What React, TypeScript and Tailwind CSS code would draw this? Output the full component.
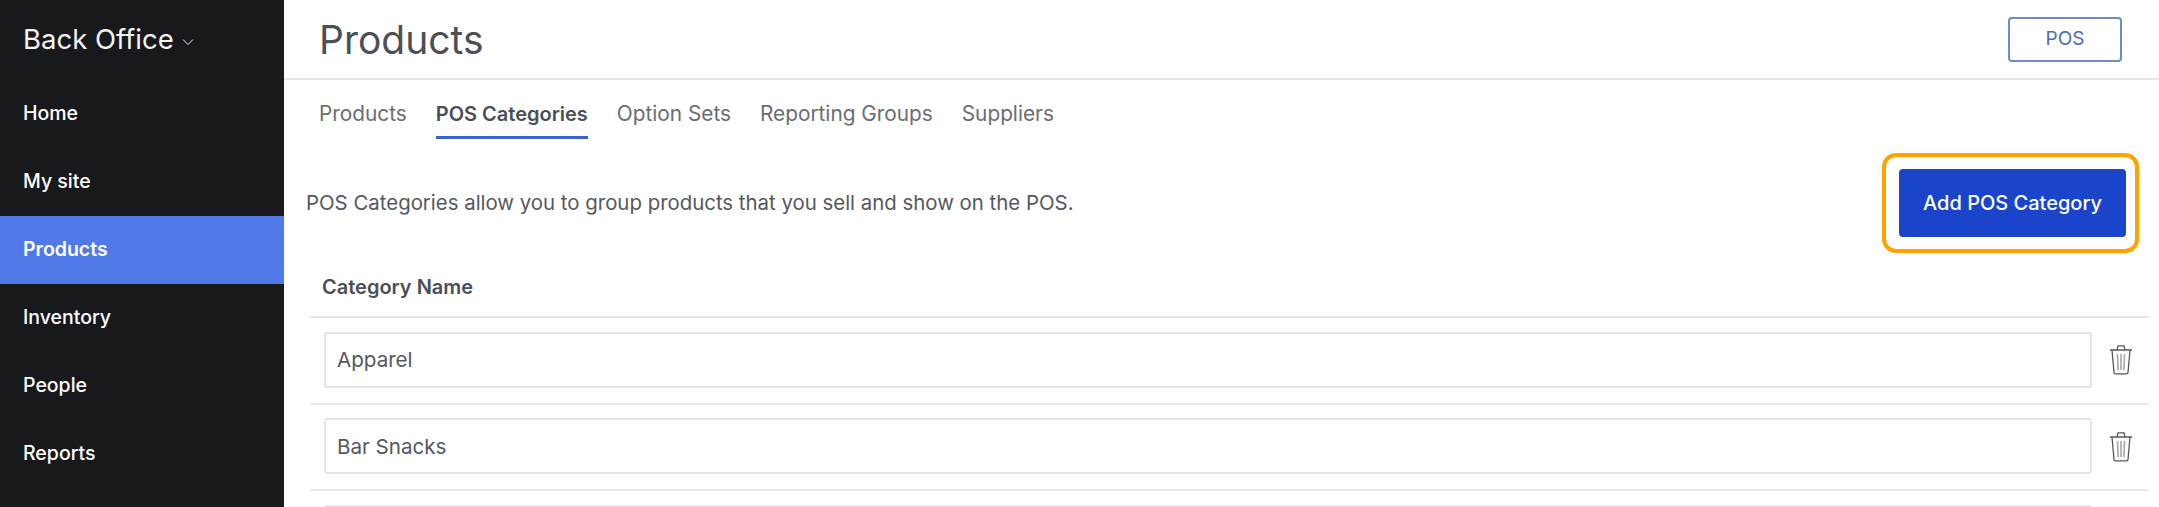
import React from 'react';

const navItems = ['Home', 'My site', 'Products', 'Inventory', 'People', 'Reports'];
const tabs = ['Products', 'POS Categories', 'Option Sets', 'Reporting Groups', 'Suppliers'];
const categories = ['Apparel', 'Bar Snacks', ''];

const TrashIcon = () => (
  <svg className="w-[24px] h-[31px] text-[#54585e]" viewBox="0 0 24 31" fill="none" stroke="currentColor" strokeWidth={1.3}>
    <path d="M1 6h22M8 6l1-4.2h6L16 6" />
    <path d="M3 6l2 22.5a1.5 1.5 0 001.5 1.3h11a1.5 1.5 0 001.5-1.3L21 6" />
    <path d="M8.5 10l.6 16M12 10v16M15.5 10l-.6 16" strokeWidth={1.6} stroke="#a3a8af" />
  </svg>
);

const App: React.FC = () => {
  return (
    <div className="flex h-[507px] w-[2159px] overflow-hidden bg-white font-['Inter',sans-serif]">
      <aside className="w-[284px] shrink-0 bg-[#18191d] text-white">
        <div className="h-[80px] pl-[23px] flex items-center text-[27.5px] text-[#f4f4f4]">
          Back Office
          <svg className="w-[12px] h-[8px] ml-[8px] mt-[4px]" viewBox="0 0 12 8" fill="none" stroke="currentColor" strokeWidth={1}>
            <path d="M1 1.5l5 5 5-5" />
          </svg>
        </div>
        <nav>
          {navItems.map(item => (
            <div
              key={item}
              className={`h-[68px] pl-[23px] flex items-center text-[19.5px] font-medium ${item === 'Products' ? 'bg-[#5079e8] font-semibold' : ''}`}
            >
              {item}
            </div>
          ))}
        </nav>
      </aside>

      <main className="flex-1 min-w-0">
        <header className="h-[80px] border-b-2 border-[#e6e6e6] flex items-center justify-between pl-[35px] pr-[37px]">
          <h1 className="text-[39px] text-[#4c4f54] leading-none">Products</h1>
          <button className="w-[114px] h-[45px] border-2 border-[#6e8cc4] rounded-[4px] text-[19px] text-[#4a6cb5]">POS</button>
        </header>

        <div className="flex gap-[29px] pl-[35px] h-[59px]">
          {tabs.map(tab => (
            <div
              key={tab}
              className={`h-full flex items-center pt-[11px] border-b-[3px] ${tab === 'POS Categories' ? 'text-[20px] font-semibold text-[#4c4f54] border-[#3a63cf]' : 'text-[20.8px] text-[#6a6d72] border-transparent'}`}
            >
              {tab}
            </div>
          ))}
        </div>

        <div className="flex items-center justify-between pl-[22px] pr-[20px] pt-[14px]">
          <p className="text-[20.4px] text-[#55585d]">POS Categories allow you to group products that you sell and show on the POS.</p>
          <div className="border-[4px] border-[#ffa200] rounded-[14px] pl-[13px] pr-[9px] py-[12px]">
            <button className="w-[227px] h-[68px] rounded-[4px] bg-[#1a44c9] text-white text-[20px] font-medium">Add POS Category</button>
          </div>
        </div>

        <div className="ml-[26px] mr-[10px]">
          <div className="h-[65px] border-b-2 border-[#e3e5e8] pl-[12px] pt-[4px] flex items-center text-[20px] font-semibold text-[#4c4f54]">
            Category Name
          </div>
          {categories.map((name, i) => (
            <div key={i} className="h-[86.5px] border-b-2 border-[#e6e8ea] pl-[14px] pb-[1px] flex items-center">
              <div className="flex-1 h-[56px] border-2 border-[#e3e5e8] rounded-[3px] pl-[11px] pt-[2px] flex items-center text-[20.6px] text-[#55585d]">
                {name}
              </div>
              <div className="w-[57px] flex justify-center">
                <TrashIcon />
              </div>
            </div>
          ))}
        </div>
      </main>
    </div>
  );
};

export default App;
